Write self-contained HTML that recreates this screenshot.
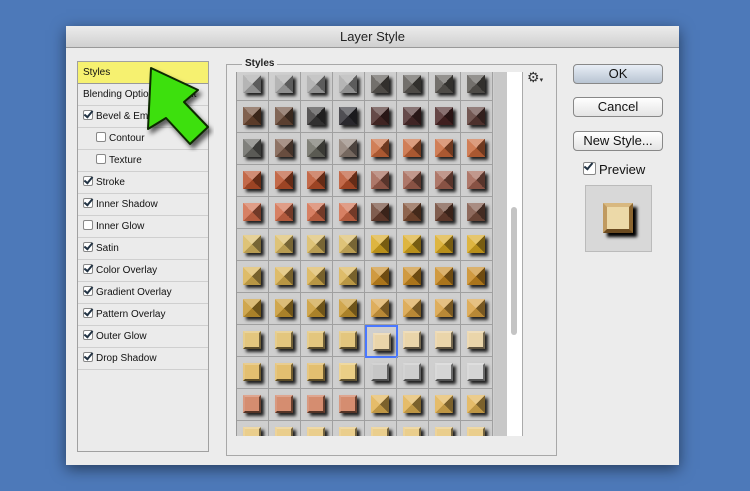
<!DOCTYPE html><html><head><style>
body{margin:0;width:750px;height:491px;background:#4d79b9;font-family:"Liberation Sans",sans-serif;position:relative;overflow:hidden}
.dlg{position:absolute;left:66px;top:26px;width:613px;height:439px;background:#ececec;box-shadow:0 4px 14px rgba(0,0,0,.5)}
.title{position:absolute;left:0;top:0;width:100%;height:21px;background:linear-gradient(#ececec,#d0d0d0);border-bottom:1px solid #999;text-align:center;font-size:13px;line-height:22px;color:#222}
.list{position:absolute;left:77px;top:61px;width:130px;height:389px;background:#ebebeb;border:1px solid #a0a0a0}
.row{height:21px;border-bottom:1px solid #cfcfcf;font-size:10px;line-height:21px;color:#111;padding-left:5px;position:relative}
.cb{display:inline-block;width:8px;height:8px;border:1px solid #888;border-radius:2px;background:#fff;vertical-align:-1px;margin-right:3px;position:relative}
.cb.on::after{content:"";position:absolute;left:2px;top:-2px;width:3px;height:7px;border:solid #234;border-width:0 2px 2px 0;transform:rotate(40deg)}
.frame{position:absolute;left:226px;top:64px;width:329px;height:390px;border:1px solid #a8a8a8}
.grid{position:absolute;left:236px;top:72px;width:257px;height:364px;overflow:hidden;background:#cfcfcf;border-left:1px solid #999}
.cell{position:absolute;width:31px;height:31px;border-right:1px solid #a0a0a0;border-bottom:1px solid #a0a0a0}
.sw{position:absolute;left:6px;top:6px;width:18px;height:18px;box-shadow:3px 3px 3px rgba(0,0,0,.85)}
.btn{position:absolute;left:573px;width:88px;height:18px;border:1px solid #888;border-radius:4px;background:linear-gradient(#fff,#e4e4e4);font-size:13px;text-align:center;line-height:18px;color:#111}
</style></head><body>
<div class="dlg"><div class="title">Layer Style</div></div>
<div class="list">
<div class="row" style="background:#f6f170;border-bottom-color:#999">Styles</div>
<div class="row">Blending Options: Default</div>
<div class="row"><span class="cb on"></span>Bevel &amp; Emboss</div>
<div class="row" style="padding-left:18px"><span class="cb"></span>Contour</div>
<div class="row" style="padding-left:18px"><span class="cb"></span>Texture</div>
<div class="row"><span class="cb on"></span>Stroke</div>
<div class="row"><span class="cb on"></span>Inner Shadow</div>
<div class="row"><span class="cb"></span>Inner Glow</div>
<div class="row"><span class="cb on"></span>Satin</div>
<div class="row"><span class="cb on"></span>Color Overlay</div>
<div class="row"><span class="cb on"></span>Gradient Overlay</div>
<div class="row"><span class="cb on"></span>Pattern Overlay</div>
<div class="row"><span class="cb on"></span>Outer Glow</div>
<div class="row"><span class="cb on"></span>Drop Shadow</div>
</div>
<div class="frame"></div>
<div style="position:absolute;left:242px;top:58px;background:#ececec;padding:0 3px;font-size:10px;font-weight:bold;color:#222">Styles</div>
<div style="position:absolute;left:493px;top:72px;width:14px;height:364px;background:#c8c8c8"></div>
<div style="position:absolute;left:507px;top:72px;width:15px;height:364px;background:#fff;border-right:1px solid #aaa"></div>
<div style="position:absolute;left:511px;top:207px;width:6px;height:128px;background:#c4c4c4;border-radius:3px"></div>
<div style="position:absolute;left:527px;top:69px;font-size:14px;color:#333">⚙<span style="font-size:7px">▾</span></div>
<div class="grid" id="g"></div>
<div class="btn" style="top:64px;background:linear-gradient(#e8eef6,#b8c4d2)">OK</div>
<div class="btn" style="top:97px">Cancel</div>
<div class="btn" style="top:131px">New Style...</div>
<div style="position:absolute;left:583px;top:162px;font-size:13px;color:#111"><span class="cb on" style="width:11px;height:11px"></span>Preview</div>
<div style="position:absolute;left:585px;top:185px;width:65px;height:65px;background:#d8d8d8;border:1px solid #bbb">
<div style="position:absolute;left:17px;top:17px;width:22px;height:22px;background:#ecd9a8;border:4px solid #b08a50;border-color:#d8b880 #8a6530 #6a4a20 #c09a60;box-shadow:4px 4px 3px #000"></div></div>
<svg style="position:absolute;left:0;top:0" width="260" height="200"><defs><filter id="f"><feDropShadow dx="3" dy="4" stdDeviation="2.5" flood-color="#000" flood-opacity=".6"/></filter></defs><polygon filter="url(#f)" points="151,68 198,90 184,102 208,127 190,144 166,118 148,129" fill="#3ee00a" stroke="#0a2a00" stroke-width="2" stroke-linejoin="round"/></svg>
<script>
var R=[
['p','#a8a8a8','#a8a8a8','#a8a8a8','#a8a8a8','#5a5752','#5a5752','#5a5752','#5a5752'],
['p','#6a4530','#6a4a38','#3a3838','#302f35','#4a2a28','#4a2a2a','#4a2525','#5a3a35'],
['p','#6a6a65','#7a5a4a','#6a6a60','#8a7a70','#c8683a','#c8683a','#c8683a','#c8683a'],
['p','#b8502a','#b8502a','#b8502a','#b8502a','#a06050','#a06050','#a06050','#a06050'],
['p','#d06a48','#d06a48','#d06a48','#d06a48','#6a4030','#7a4a30','#6a4030','#7a5040'],
['p','#d8b860','#d8b860','#d8b860','#d8b860','#d8a820','#d8a820','#d8a820','#d8a820'],
['p','#d8b050','#d8b050','#d8b050','#d8b050','#c88820','#c88820','#c88820','#c88820'],
['p','#c89830','#c89830','#c89830','#c89830','#d8a040','#d8a040','#d8a040','#d8a040'],
['s','#e0c070','#e0c070','#e0c070','#e0c070','#e8d0a0','#e8d0a0','#e8d0a0','#e8d0a0'],
['s','#e0b860','#e0b860','#e0b860','#e8c878','#c0c0c0','#c8c8c8','#d0d0d0','#d0d0d0'],
['s','#d08060','#d08060','#d08060','#d08060','#e0b050','#e0b050','#e0b050','#e0b050'],
['s','#e8c880','#e8c880','#e8c880','#e8c880','#e8c880','#e8c880','#e8c880','#e8c880']];
function sh(c,f){var n=parseInt(c.slice(1),16),r=n>>16,g=n>>8&255,b=n&255;function m(v){return Math.max(0,Math.min(255,Math.round(f>1?v+(255-v)*(f-1):v*f)))}return'rgb('+m(r)+','+m(g)+','+m(b)+')'}
var h='';for(var r=0;r<12;r++)for(var c=0;c<8;c++){var col=R[r][c+1],bg;
if(R[r][0]=='p'||(r==10&&c>=4))bg='background:conic-gradient(from -45deg,'+sh(col,1.35)+' 0 25%,'+sh(col,.55)+' 0 50%,'+sh(col,.85)+' 0 75%,'+sh(col,1.15)+' 0)';
else bg='background:'+sh(col,1.1)+';border:2px solid;border-color:'+sh(col,1.3)+' '+sh(col,.5)+' '+sh(col,.4)+' '+sh(col,1.2)+';width:14px;height:14px';
var sel=(r==8&&c==4)?'border:2px solid #4a78ff;width:29px;height:29px;':'';
h+='<div class="cell" style="'+sel+'left:'+(c*32)+'px;top:'+(r*32-3)+'px"><div class="sw" style="'+bg+'"></div></div>'}
document.getElementById('g').innerHTML=h;
</script>
</body></html>
